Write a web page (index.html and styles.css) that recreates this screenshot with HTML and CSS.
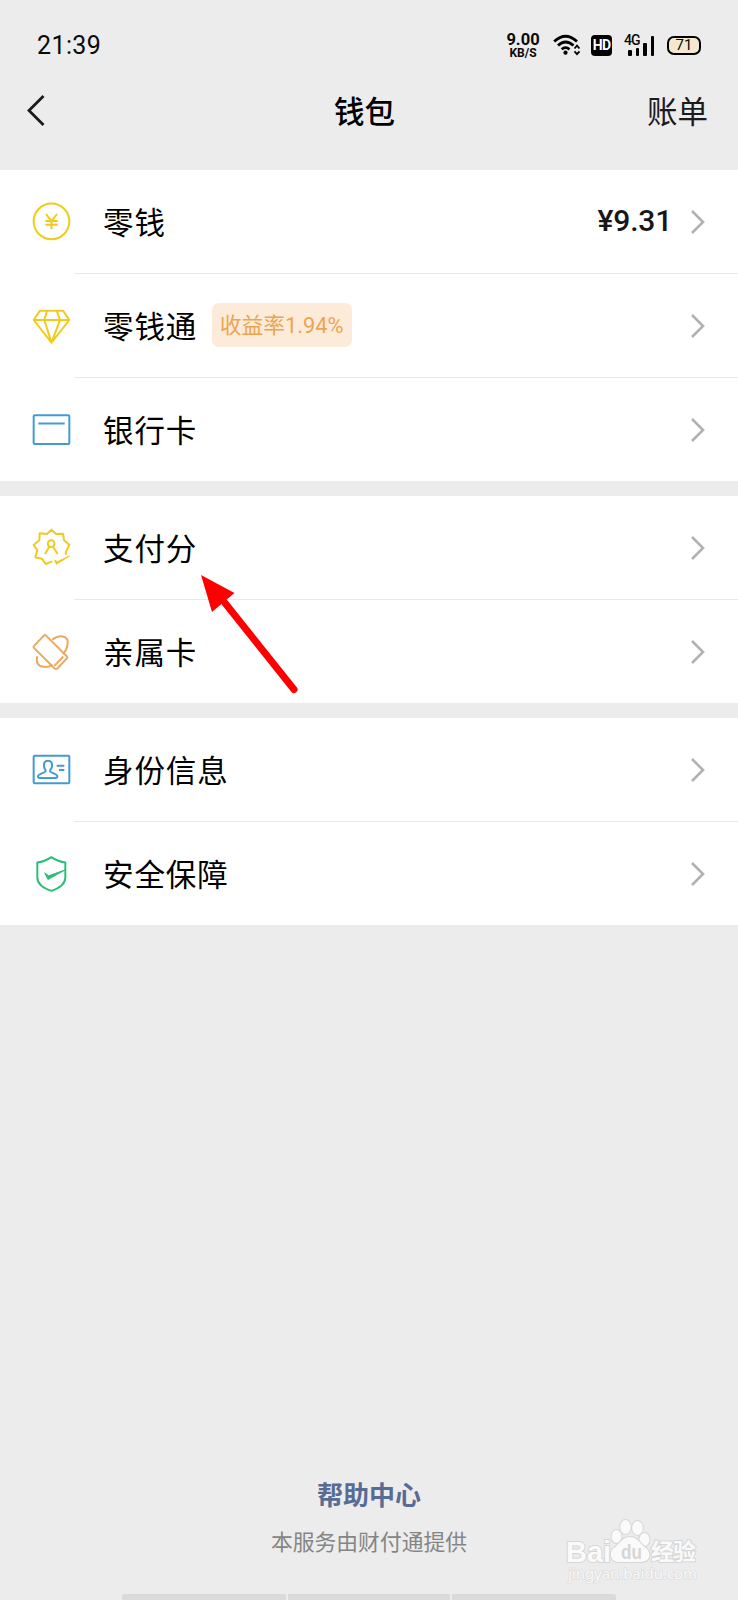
FILE: index.html
```html
<!DOCTYPE html>
<html lang="zh-CN">
<head>
<meta charset="utf-8">
<title>钱包</title>
<link rel="stylesheet" href="styles.css">
</head>
<body>
<div class="screen">
  <header class="top">
    <div class="status">
      <span class="clock">21:39</span>
      <div class="indicators">
        <div class="speed"><span class="speed-value">9.00</span><span class="speed-unit">KB/S</span></div>
        <svg class="wifi" width="28" height="22" viewBox="0 0 28 22" fill="none" stroke="#000" stroke-width="2.8">
          <path d="M1.2 7.500Q12.500-3 24 7.500M5 11.500Q12.500 4.500 20.500 11.500M8.700 15.300Q12.500 12 16.500 15.300"/>
          <circle cx="12.500" cy="18.700" r="2.100" fill="#000" stroke="none"/>
          <path d="M21.500 14.500l2.500-2.800l2.500 2.800M21.500 17.300l2.500 2.800l2.500-2.800" stroke-width="1.800"/>
        </svg>
        <span class="hd">HD</span>
        <div class="signal">
          <span class="network">4G</span>
          <i class="bar bar1"></i><i class="bar bar2"></i><i class="bar bar3"></i><i class="bar bar4"></i>
        </div>
        <div class="battery">71</div>
      </div>
    </div>
    <nav class="nav">
      <svg class="back" width="20" height="34" viewBox="0 0 20 34" fill="none" stroke="#1b1b1b" stroke-width="2.800"><path d="M17.500 3L3 17.500L17.500 32"/></svg>
      <h1 class="title">钱包</h1>
      <span class="bill">账单</span>
    </nav>
  </header>

  <main>
    <section class="group">
      <div class="row">
        <svg class="icon yellow" viewBox="93 66 120 120"><circle cx="154.500" cy="124" r="53.500"/><path d="M138 102l16.500 22L171 102M154.500 124v24M136 123h37M136 134.500h37"/></svg>
        <div class="cell"><span class="label">零钱</span><span class="amount">¥9.31</span><svg class="chevron" viewBox="0 0 14 24"><path d="M1 1L12 12L1 23"/></svg></div>
      </div>
      <div class="row">
        <svg class="icon yellow" viewBox="93 378 120 120"><path d="M120 392h69l19 28l-53.500 68L101 420zM101 420h107M141 392l-8 28l21.500 68L180 420l-10-28"/></svg>
        <div class="cell"><span class="label">零钱通</span><span class="rate">收益率1.94%</span><svg class="chevron" viewBox="0 0 14 24"><path d="M1 1L12 12L1 23"/></svg></div>
      </div>
      <div class="row last">
        <svg class="icon blue" viewBox="93 688.500 120 120"><rect x="101" y="704.500" width="107" height="86" rx="3"/><path d="M115 729h79"/></svg>
        <div class="cell"><span class="label">银行卡</span><svg class="chevron" viewBox="0 0 14 24"><path d="M1 1L12 12L1 23"/></svg></div>
      </div>
    </section>

    <section class="group">
      <div class="row">
        <svg class="icon yellow" viewBox="93 84 120 120"><path d="M197 164l1-9l10-20l-16-15l-3-19l-21 1l-13.500-13l-13.500 13l-22-2l-1 21l-17 14l11 16l-6 21l21 5l10 15l20-8"/><circle cx="153.500" cy="131" r="10"/><path d="M135 162l13-22M159 140l14 22"/><path d="M164 180l8 5l37-17l-40 25z" fill="#f0cb1c" stroke-width="3"/></svg>
        <div class="cell"><span class="label">支付分</span><svg class="chevron" viewBox="0 0 14 24"><path d="M1 1L12 12L1 23"/></svg></div>
      </div>
      <div class="row last">
        <svg class="icon orange" viewBox="93 394.500 120 120"><path d="M131 406q4-4 8 0l62 62q2 3 0 5l-29 31q-4 3-8 0l-62-62q-3-3 0-6z"/><path d="M157 418C176 402 204 404 203 426C203 441 197 452 189 461M112 467C107 484 113 498 131 499C142 500 151 497 158 493M190 468l-27 28"/></svg>
        <div class="cell"><span class="label">亲属卡</span><svg class="chevron" viewBox="0 0 14 24"><path d="M1 1L12 12L1 23"/></svg></div>
      </div>
    </section>

    <section class="group">
      <div class="row">
        <svg class="icon blue" viewBox="93 150 120 120"><rect x="101" y="167" width="107" height="83" rx="3"/><path d="M144 182C134 182 131 190 132 199C133 207 137 208 137 213C137 219 114 220 114 229Q114 234 119 234H167Q172 234 172 229C172 220 150 219 150 213C150 208 155 207 156 199C157 190 154 182 144 182z"/><path d="M170 197.500h23M177 210h16"/></svg>
        <div class="cell"><span class="label">身份信息</span><svg class="chevron" viewBox="0 0 14 24"><path d="M1 1L12 12L1 23"/></svg></div>
      </div>
      <div class="row last">
        <svg class="icon green" viewBox="93 460.500 120 120"><path d="M154 470Q175 484 196 486V530C196 549 178 563 154 571C130 563 112 549 112 530V486Q134 484 154 470z"/><path d="M134 517l12 9l50-18l-52 29z" fill="#2ebd79" stroke-width="3"/></svg>
        <div class="cell"><span class="label">安全保障</span><svg class="chevron" viewBox="0 0 14 24"><path d="M1 1L12 12L1 23"/></svg></div>
      </div>
    </section>
  </main>

  <footer class="foot">
    <a class="help">帮助中心</a>
    <p class="provider">本服务由财付通提供</p>
  </footer>
  <div class="home-bar"><i></i><i></i><i></i></div>

  <svg class="arrow" width="98" height="122" viewBox="0 0 98 122"><path d="M24 28L93 114.500" stroke="#fe0000" stroke-width="7" stroke-linecap="round"/><path d="M0 0L33.500 18L11 37z" fill="#fe0000"/></svg>

  <svg class="watermark" width="150" height="76" viewBox="0 0 150 76">
    <g class="wm-shape">
      <ellipse cx="56.500" cy="21.500" rx="5" ry="6.500"/>
      <ellipse cx="65.500" cy="12" rx="5.300" ry="7"/>
      <ellipse cx="77.500" cy="13" rx="5.300" ry="7"/>
      <ellipse cx="84.500" cy="24.500" rx="5" ry="6.500"/>
      <path d="M70 22C62 22 60 29 54 33C48 38 51 47 59 47H81C90 47 92 38 86 33C80 29 78 22 70 22z"/>
      <text class="wm-latin" x="6" y="46.500" font-size="29" textLength="45" lengthAdjust="spacingAndGlyphs">Bai</text>
      <text class="wm-cjk" x="91" y="45" font-size="23" textLength="45">经验</text>
    </g>
    <text class="wm-du" x="61" y="44" font-size="21" textLength="21" lengthAdjust="spacingAndGlyphs">du</text>
    <text class="wm-url" x="8" y="64" font-size="14" textLength="129" lengthAdjust="spacingAndGlyphs">jingyan.baidu.com</text>
  </svg>
</div>
</body>
</html>
```
FILE: styles.css
```css
* { box-sizing: border-box; }
body {
  margin: 0;
  background: #ececec;
  font-family: "Noto Sans CJK SC", sans-serif;
  color: #0a0a0a;
}
.screen {
  position: relative;
  display: flex;
  flex-direction: column;
  width: 738px;
  height: 1600px;
  overflow: hidden;
}
.top { height: 170px; }
.status {
  display: flex;
  justify-content: space-between;
  align-items: center;
  height: 90px;
  padding: 0 37px;
}
.clock { padding-top: 2px; font: 25px/30px Roboto, sans-serif; letter-spacing: 0.4px; }
.indicators { display: flex; align-items: center; height: 30px; }
.speed {
  display: flex;
  flex-direction: column;
  align-items: center;
  width: 34px;
  margin: 2px 13px 0 -1px;
  font-family: Roboto, sans-serif;
  font-weight: 700;
}
.speed-value { font-size: 16.500px; line-height: 14px; }
.speed-unit { font-size: 12px; line-height: 13px; }
.wifi { margin-right: 10px; }
.hd {
  width: 21px;
  height: 21px;
  margin-right: 12px;
  border-radius: 4px;
  background: #000;
  color: #fff;
  font: 700 14px/21px Roboto, sans-serif;
  letter-spacing: -0.8px;
  text-align: center;
}
.signal {
  position: relative;
  display: flex;
  align-items: flex-end;
  gap: 4px;
  width: 31px;
  height: 21px;
  margin-right: 12px;
  padding-left: 4px;
}
.network {
  position: absolute;
  left: 0;
  top: -1px;
  font: 500 14px/13px Roboto, sans-serif;
  letter-spacing: -1px;
}
.bar { width: 3.500px; border-radius: 1px; background: #000; }
.bar1 { height: 6px; }
.bar2 { height: 8px; }
.bar3 { height: 13px; }
.bar4 { height: 20px; }
.battery {
  width: 34px;
  height: 19px;
  border: 2px solid #000;
  border-radius: 7px;
  background: #f4e9cf;
  font: 15px/15px Roboto, sans-serif;
  text-align: center;
}
.nav {
  display: grid;
  grid-template-columns: 1fr auto 1fr;
  align-items: center;
  height: 40px;
  padding: 0 30px 0 26px;
}
.title { margin: 0 5px 0 0; font-size: 30.500px; font-weight: 500; line-height: 40px; color: #000; }
.bill { justify-self: end; font-size: 30.500px; line-height: 40px; color: #1b1b1b; }
.group { margin-bottom: 15px; background: #fff; }
.row { display: flex; align-items: center; height: 104px; padding-left: 31px; }
.row.last { height: 103px; }
.icon {
  flex: none;
  width: 40px;
  height: 40px;
  fill: none;
  stroke-width: 6;
  stroke-linejoin: round;
}
.yellow { stroke: #f0cb1c; }
.blue { stroke: #439bd3; }
.orange { stroke: #eda95d; }
.green { stroke: #2ebd79; }
.cell {
  display: flex;
  flex: 1;
  align-items: center;
  height: 100%;
  margin-left: 3px;
  padding: 0 33px 0 29px;
  border-bottom: 1px solid #e9e9e9;
}
.last .cell { border-bottom: 0; }
.label { padding-bottom: 2px; font-size: 30.500px; line-height: 44px; letter-spacing: 0.900px; color: #000; }
.amount {
  margin-left: auto;
  padding-bottom: 1px;
  font: 500 30px/40px Roboto, sans-serif;
  letter-spacing: -0.2px;
  color: #181818;
}
.chevron {
  width: 14px;
  height: 24px;
  margin-left: auto;
  fill: none;
  stroke: #b2b2b2;
  stroke-width: 2.600;
}
.amount + .chevron { margin-left: 19px; }
.rate {
  height: 44px;
  margin: 0 0 1px 14.500px;
  padding: 0 8px;
  border-radius: 7px;
  background: #fdebd9;
  color: #eba552;
  font: 21.800px/46px Roboto, "Noto Sans CJK SC", sans-serif;
}
.foot { margin-top: auto; text-align: center; }
.help { display: block; font-size: 26px; font-weight: 700; line-height: 36px; color: #586b95; }
.provider { margin: 13px 0 37px; font-size: 21.800px; line-height: 32px; color: #858585; }
.home-bar { display: grid; grid-template-columns: 164px 162px 1fr; gap: 2px; width: 494px; height: 6px; margin-left: 122px; }
.home-bar i { background: #dadada; }
.home-bar i:first-child { border-top-left-radius: 3px; }
.home-bar i:last-child { border-top-right-radius: 3px; }
.arrow { position: absolute; left: 201px; top: 575px; }
.watermark { position: absolute; left: 560px; top: 1515px; }
.wm-shape { fill: #fafafa; stroke: #d6d6d6; stroke-width: 2; paint-order: stroke; }
.wm-latin { font-family: "Liberation Sans", sans-serif; font-weight: 700; }
.wm-cjk { font-family: "Noto Sans CJK SC", sans-serif; font-weight: 700; }
.wm-du { font-family: "Liberation Sans", sans-serif; font-weight: 700; fill: #d6d6d6; }
.wm-url { font-family: "Noto Sans", sans-serif; fill: #f9f9f9; stroke: #d9d9d9; stroke-width: 1.200; paint-order: stroke; }
```
